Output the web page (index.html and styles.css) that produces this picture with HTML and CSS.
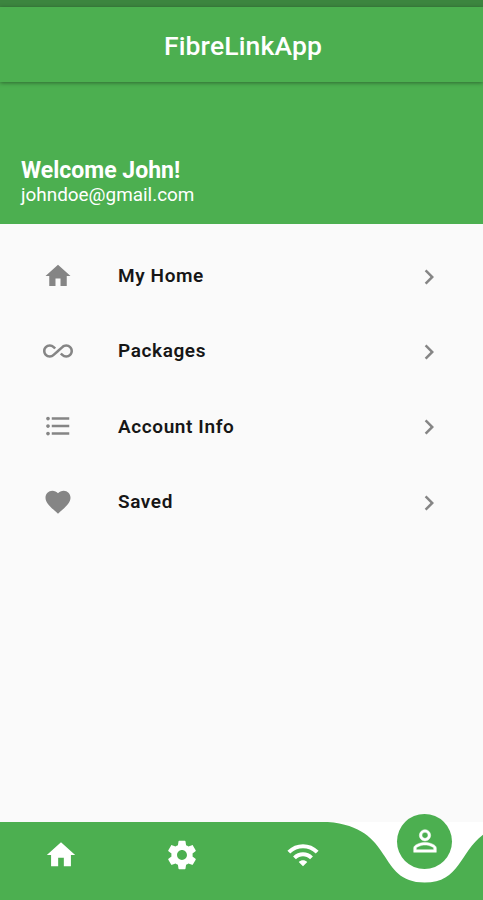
FILE: index.html
```
<!DOCTYPE html>
<html lang="en">
<head>
    <meta charset="UTF-8">
    <meta name="viewport" content="width=device-width, initial-scale=1.0">
    <title>FibreLinkApp</title>
    <link rel="stylesheet" href="styles.css">
</head>
<body>
    <div class="status-bar"></div>
    <header class="app-bar">
        <h1>FibreLinkApp</h1>
    </header>

    <section class="profile">
        <h2>Welcome John!</h2>
        <p>johndoe@gmail.com</p>
    </section>

    <main class="menu">
        <a class="menu-item">
            <svg class="icon" viewBox="0 0 24 24"><path d="M10 20v-6h4v6h5v-8h3L12 3 2 12h3v8z"/></svg>
            <span>My Home</span>
            <svg class="chevron" viewBox="0 0 24 24"><path d="M10 6L8.59 7.41 13.17 12l-4.58 4.59L10 18l6-6z"/></svg>
        </a>
        <a class="menu-item">
            <svg class="icon" viewBox="0 0 24 24"><path d="M18.6 6.62c-1.44 0-2.8.56-3.77 1.53L12 10.66 10.48 12h.01L7.8 14.39c-.64.64-1.49.99-2.4.99-1.87 0-3.39-1.51-3.39-3.38S3.53 8.62 5.4 8.62c.91 0 1.76.35 2.44 1.03l1.13 1 1.51-1.34L9.22 8.2C8.2 7.18 6.84 6.62 5.4 6.62 2.42 6.62 0 9.04 0 12s2.42 5.38 5.4 5.38c1.44 0 2.8-.56 3.77-1.53l2.83-2.5.01.01L13.52 12h-.01l2.69-2.39c.64-.64 1.49-.99 2.4-.99 1.87 0 3.39 1.51 3.39 3.38s-1.52 3.38-3.39 3.38c-.9 0-1.76-.35-2.44-1.03l-1.14-1.01-1.51 1.34 1.27 1.12c1.02 1.01 2.37 1.57 3.82 1.57 2.98 0 5.4-2.41 5.4-5.38s-2.42-5.37-5.4-5.37z"/></svg>
            <span>Packages</span>
            <svg class="chevron" viewBox="0 0 24 24"><path d="M10 6L8.59 7.41 13.17 12l-4.58 4.59L10 18l6-6z"/></svg>
        </a>
        <a class="menu-item">
            <svg class="icon" viewBox="0 0 24 24"><path d="M4 10.5c-.83 0-1.5.67-1.5 1.5s.67 1.5 1.5 1.5 1.5-.67 1.5-1.5-.67-1.5-1.5-1.5zm0-6c-.83 0-1.5.67-1.5 1.5S3.17 7.5 4 7.5 5.5 6.83 5.5 6 4.83 4.5 4 4.5zm0 12c-.83 0-1.5.68-1.5 1.5s.68 1.5 1.5 1.5 1.5-.68 1.5-1.5-.67-1.5-1.5-1.5zM7 19h14v-2H7v2zm0-6h14v-2H7v2zm0-8v2h14V5H7z"/></svg>
            <span>Account Info</span>
            <svg class="chevron" viewBox="0 0 24 24"><path d="M10 6L8.59 7.41 13.17 12l-4.58 4.59L10 18l6-6z"/></svg>
        </a>
        <a class="menu-item">
            <svg class="icon" viewBox="0 0 24 24"><path d="M12 21.35l-1.45-1.32C5.4 15.36 2 12.28 2 8.5 2 5.42 4.42 3 7.5 3c1.74 0 3.41.81 4.5 2.09C13.09 3.81 14.76 3 16.5 3 19.58 3 22 5.42 22 8.5c0 3.78-3.4 6.86-8.55 11.54L12 21.35z"/></svg>
            <span>Saved</span>
            <svg class="chevron" viewBox="0 0 24 24"><path d="M10 6L8.59 7.41 13.17 12l-4.58 4.59L10 18l6-6z"/></svg>
        </a>
    </main>

    <nav class="bottom-nav">
        <svg class="nav-curve" viewBox="0 0 483 78"><path d="M0 0H327.6C395.5 5 376.1 60.5 424.6 60.5S453.7 5 521.6 0V78H0z"/></svg>
        <a class="nav-item">
            <svg viewBox="0 0 24 24"><path d="M10 20v-6h4v6h5v-8h3L12 3 2 12h3v8z"/></svg>
        </a>
        <a class="nav-item">
            <svg viewBox="0 0 24 24"><path d="M19.43 12.98c.04-.32.07-.64.07-.98s-.03-.66-.07-.98l2.11-1.65c.19-.15.24-.42.12-.64l-2-3.46c-.12-.22-.39-.3-.61-.22l-2.49 1c-.52-.4-1.08-.73-1.69-.98l-.38-2.65C14.46 2.18 14.25 2 14 2h-4c-.25 0-.46.18-.49.42l-.38 2.65c-.61.25-1.17.59-1.69.98l-2.49-1c-.23-.09-.49 0-.61.22l-2 3.46c-.13.22-.07.49.12.64l2.11 1.65c-.04.32-.07.65-.07.98s.03.66.07.98l-2.11 1.65c-.19.15-.24.42-.12.64l2 3.46c.12.22.39.3.61.22l2.49-1c.52.4 1.08.73 1.69.98l.38 2.65c.03.24.24.42.49.42h4c.25 0 .46-.18.49-.42l.38-2.65c.61-.25 1.17-.59 1.69-.98l2.49 1c.23.09.49 0 .61-.22l2-3.46c.12-.22.07-.49-.12-.64l-2.11-1.65zM12 15.5c-1.93 0-3.5-1.57-3.5-3.5s1.57-3.5 3.5-3.5 3.5 1.57 3.5 3.5-1.57 3.5-3.5 3.5z"/></svg>
        </a>
        <a class="nav-item">
            <svg viewBox="0 0 24 24"><path d="M1 9l2 2c4.97-4.97 13.03-4.97 18 0l2-2C16.93 2.93 7.08 2.93 1 9zm8 8l3 3 3-3c-1.65-1.66-4.34-1.66-6 0zm-4-4l2 2c2.76-2.76 7.24-2.76 10 0l2-2C15.14 9.14 8.87 9.14 5 13z"/></svg>
        </a>
        <a class="nav-item active">
            <svg viewBox="0 0 24 24"><path d="M12 5.9c1.16 0 2.1.94 2.1 2.1s-.94 2.1-2.1 2.1S9.9 9.16 9.9 8s.94-2.1 2.1-2.1m0 9c2.97 0 6.1 1.46 6.1 2.1v1.1H5.9V17c0-.64 3.13-2.1 6.1-2.1M12 4C9.79 4 8 5.79 8 8s1.79 4 4 4 4-1.79 4-4-1.79-4-4-4zm0 9c-2.67 0-8 1.34-8 4v3h16v-3c0-2.66-5.33-4-8-4z"/></svg>
        </a>
    </nav>
</body>
</html>
```
FILE: styles.css
```
* {
    margin: 0;
    padding: 0;
    box-sizing: border-box;
}

body {
    display: flex;
    flex-direction: column;
    height: 100vh;
    overflow: hidden;
    background: #fafafa;
    font-family: Roboto, sans-serif;
}

.status-bar {
    height: 7px;
    background: #3c853f;
}

.app-bar {
    display: flex;
    justify-content: center;
    align-items: center;
    height: 75px;
    padding: 2px 0 0 3px;
    background: #4caf50;
    box-shadow: 0 1px 4px rgba(0, 0, 0, 0.4);
    color: white;
    z-index: 1;
}

.app-bar h1 {
    font-size: 26.5px;
    font-weight: 500;
    letter-spacing: 0.15px;
}

.profile {
    height: 142px;
    padding: 76px 21px 0;
    background: #4caf50;
    color: white;
}

.profile h2 {
    font-size: 23px;
    line-height: 26px;
    font-weight: 700;
}

.profile p {
    font-size: 18.9px;
    line-height: 22px;
}

.menu {
    flex: 1;
    padding: 14px 39px 0 43px;
}

.menu-item {
    display: flex;
    align-items: center;
    height: 75.3px;
    color: #161616;
    font-size: 19px;
    font-weight: 600;
    letter-spacing: 0.6px;
}

.menu-item span {
    flex: 1;
    margin-left: 45px;
}

.icon,
.chevron {
    width: 30px;
    height: 30px;
    fill: #858585;
}

.chevron {
    margin-top: 2px;
}

.bottom-nav {
    position: relative;
    display: grid;
    grid-template-columns: repeat(4, 121.3px);
    height: 78px;
    background: white;
}

.nav-curve {
    position: absolute;
    top: 0;
    left: 0;
    width: 100%;
    height: 100%;
    fill: #4caf50;
}

.nav-item {
    position: relative;
    display: flex;
    justify-content: center;
    align-items: center;
    height: 66px;
}

.nav-item svg {
    width: 34px;
    height: 34px;
    fill: white;
}

/* selected tab floats in the dip of the bar */
.active {
    top: -8px;
    justify-self: center;
    width: 55px;
    height: 55px;
    padding-bottom: 1px;
    border-radius: 50%;
    background: #4caf50;
}

.active svg {
    stroke: white;
    stroke-width: 0.3;
}
```
